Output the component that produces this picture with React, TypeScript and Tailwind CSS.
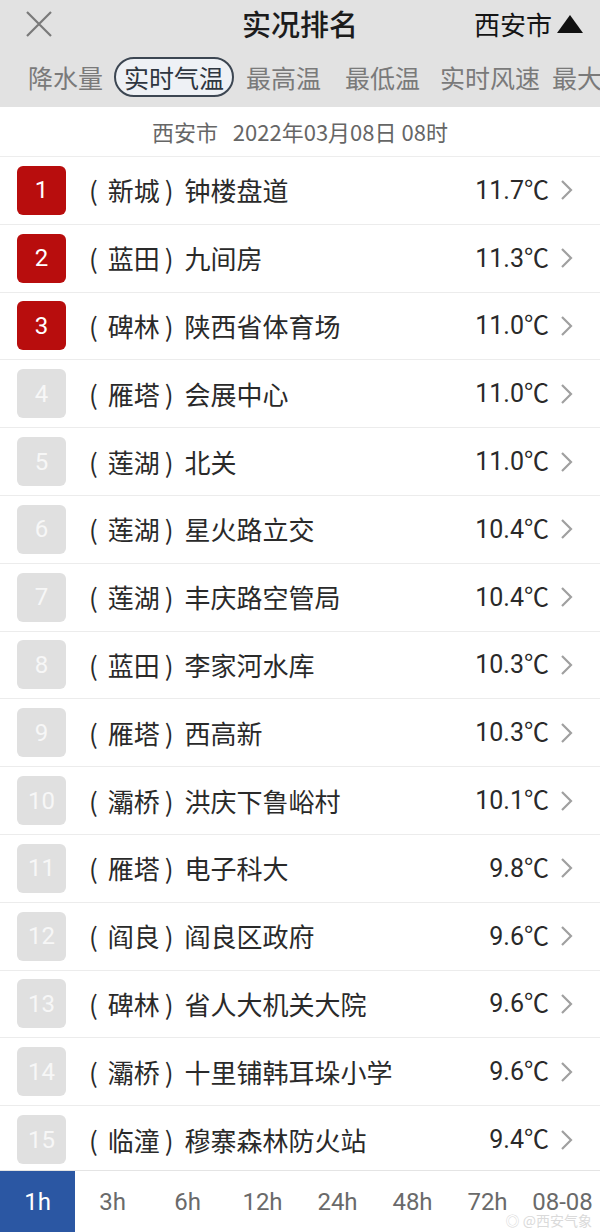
import React from "react";

const rows = [
  { d: "新城", n: "钟楼盘道", t: "11.7" },
  { d: "蓝田", n: "九间房", t: "11.3" },
  { d: "碑林", n: "陕西省体育场", t: "11.0" },
  { d: "雁塔", n: "会展中心", t: "11.0" },
  { d: "莲湖", n: "北关", t: "11.0" },
  { d: "莲湖", n: "星火路立交", t: "10.4" },
  { d: "莲湖", n: "丰庆路空管局", t: "10.4" },
  { d: "蓝田", n: "李家河水库", t: "10.3" },
  { d: "雁塔", n: "西高新", t: "10.3" },
  { d: "灞桥", n: "洪庆下鲁峪村", t: "10.1" },
  { d: "雁塔", n: "电子科大", t: "9.8" },
  { d: "阎良", n: "阎良区政府", t: "9.6" },
  { d: "碑林", n: "省人大机关大院", t: "9.6" },
  { d: "灞桥", n: "十里铺韩耳垛小学", t: "9.6" },
  { d: "临潼", n: "穆寨森林防火站", t: "9.4" },
];

const times = ["1h", "3h", "6h", "12h", "24h", "48h", "72h", "08-08"];

const cjk = { fontFamily: "'Noto Sans CJK SC', sans-serif" };
const num = { fontFamily: "Roboto, 'Noto Sans CJK SC', sans-serif" };

export default function App() {
  return (
    <div className="w-[600px] h-[1232px] overflow-hidden bg-white relative" style={cjk}>
      {/* header */}
      <div className="bg-[#e2e2e2]">
        <div className="h-[47px] flex items-center relative">
          <div className="pl-[25px] w-[150px] flex items-center">
            <svg width="28" height="28" viewBox="0 0 28 28">
              <path d="M2 2 L26 26 M26 2 L2 26" stroke="#7a7a7a" strokeWidth="2.2" fill="none" />
            </svg>
          </div>
          <div className="flex-1 text-center text-[29px] font-medium text-[#1c1c1c] leading-none">实况排名</div>
          <div className="w-[150px] flex items-center justify-end pr-[16px] gap-[4px] text-[26px] text-[#151515] leading-none">
            <span>西安市</span>
            <svg width="28" height="20" viewBox="0 0 28 20">
              <polygon points="14,1 27,19 1,19" fill="#111" />
            </svg>
          </div>
        </div>
        <div className="h-[60px] flex items-center pl-[28px] text-[25px] text-[#7a7a7a] whitespace-nowrap leading-none">
          <span>降水量</span>
          <span className="ml-[11px] h-[40px] px-[8px] flex items-center rounded-full border-2 border-[#3c4652] bg-[#eef1f5] text-[#2e3640]">实时气温</span>
          <span className="ml-[12px]">最高温</span>
          <span className="ml-[24px]">最低温</span>
          <span className="ml-[20px]">实时风速</span>
          <span className="ml-[12px]">最大风速</span>
        </div>
      </div>
      {/* date */}
      <div className="h-[50px] flex items-center justify-center text-[22px] text-[#666] border-b border-[#ededed] whitespace-pre">
        {"西安市   2022年03月08日 08时"}
      </div>
      {/* list */}
      <div>
        {rows.map((r, i) => (
          <div key={i} className="h-[67.8px] flex items-center pl-[17px] pr-[27px] border-b border-[#ececec]">
            <div
              className={
                "w-[49px] h-[49px] rounded-[6px] flex items-center justify-center text-[24px] leading-none " +
                (i < 3 ? "bg-[#b80d0d] text-white" : "bg-[#e0e0e0] text-[#f7f7f7]")
              }
              style={num}
            >
              {i + 1}
            </div>
            <div className="ml-[23px] flex-1 flex items-center text-[26px] text-[#2a2a2a] leading-none whitespace-nowrap">
              <span>(</span>
              <span className="ml-[10px]">{r.d}</span>
              <span className="ml-[5px]">)</span>
              <span className="ml-[11px]">{r.n}</span>
            </div>
            <div className="text-[25px] text-[#2a2a2a] leading-none" style={num}>
              {r.t}℃
            </div>
            <svg className="ml-[11px]" width="13" height="22" viewBox="0 0 13 22">
              <polyline points="2,2 11,11 2,20" stroke="#a0a0a0" strokeWidth="2.2" fill="none" />
            </svg>
          </div>
        ))}
      </div>
      {/* bottom */}
      <div className="absolute left-0 bottom-0 w-[600px] h-[62px] flex bg-white border-t border-[#e4e4e4]" style={num}>
        {times.map((t, i) => (
          <div
            key={t}
            className={
              "w-[75px] h-full flex items-center justify-center text-[24px] " +
              (i === 0 ? "bg-[#2b57a3] text-white" : "text-[#6a6a6a]")
            }
          >
            {t}
          </div>
        ))}
        <div className="absolute right-[8px] bottom-[5px] text-[14px] text-[#dadada] leading-none" style={cjk}>
          ◎ @西安气象
        </div>
      </div>
    </div>
  );
}
